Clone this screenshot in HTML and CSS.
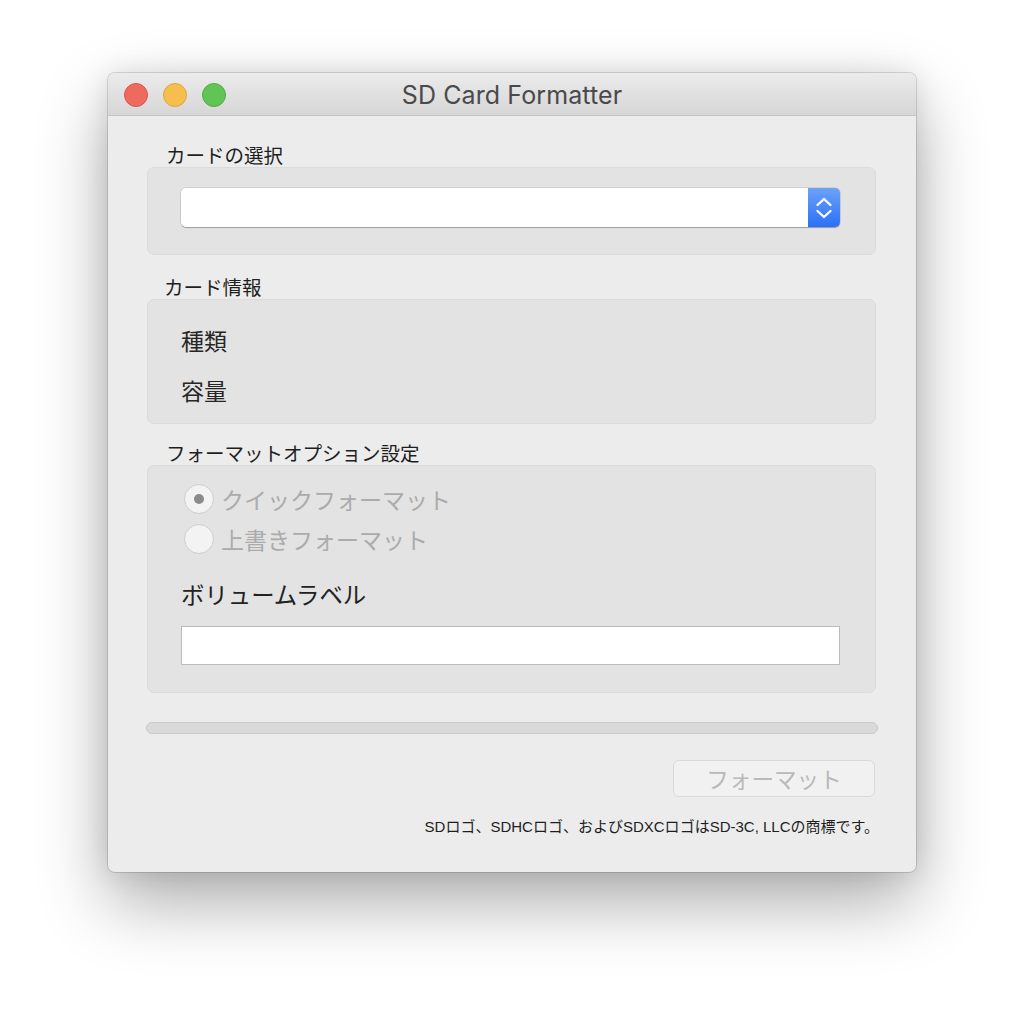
FILE: index.html
```html
<!DOCTYPE html>
<html lang="ja">
<head>
<meta charset="utf-8">
<title>SD Card Formatter</title>
<link rel="stylesheet" href="styles.css">
</head>
<body>
<div class="window">
  <div class="titlebar">
    <div class="lights">
      <span class="light red"></span>
      <span class="light yellow"></span>
      <span class="light green"></span>
    </div>
    <div class="title">SD Card Formatter</div>
    <div class="spacer"></div>
  </div>
  <div class="content">
    <div class="group-label l1">カードの選択</div>
    <div class="group g1">
      <div class="popup">
        <div class="popup-field"></div>
        <div class="stepper">
          <svg width="32" height="38" viewBox="0 0 32 38">
            <path d="M9.5 16 L16 10 L22.5 16" fill="none" stroke="#fff" stroke-width="2.3" stroke-linecap="round" stroke-linejoin="round"/>
            <path d="M9.5 22 L16 28 L22.5 22" fill="none" stroke="#fff" stroke-width="2.3" stroke-linecap="round" stroke-linejoin="round"/>
          </svg>
        </div>
      </div>
    </div>

    <div class="group-label l2">カード情報</div>
    <div class="group g2">
      <div class="info">種類</div>
      <div class="info">容量</div>
    </div>

    <div class="group-label l3">フォーマットオプション設定</div>
    <div class="group g3">
      <div class="radio-row">
        <span class="radio checked"><span class="dot"></span></span>
        <span class="radio-text">クイックフォーマット</span>
      </div>
      <div class="radio-row">
        <span class="radio"></span>
        <span class="radio-text">上書きフォーマット</span>
      </div>
      <div class="vol-label">ボリュームラベル</div>
      <div class="textfield"></div>
    </div>

    <div class="progress"></div>
    <div class="button-row">
      <div class="button">フォーマット</div>
    </div>
    <div class="footer">SDロゴ、SDHCロゴ、およびSDXCロゴはSD-3C, LLCの商標です。</div>
  </div>
</div>
</body>
</html>
```
FILE: styles.css
```css
html, body {
  margin: 0;
  padding: 0;
  background: #ffffff;
}
body {
  width: 1024px;
  height: 1016px;
  overflow: hidden;
  font-family: "Noto Sans CJK JP", "Liberation Sans", sans-serif;
}
.window {
  margin: 73px 0 0 108px;
  width: 808px;
  height: 799px;
  background: #ececec;
  border-radius: 7px;
  overflow: hidden;
  box-shadow: 0 0 0 1px rgba(0,0,0,0.13), 0 30px 70px rgba(0,0,0,0.33), 0 0 28px rgba(0,0,0,0.10);
}
.titlebar {
  height: 42px;
  border-bottom: 1px solid #c4c4c4;
  background: linear-gradient(#ebebeb, #d6d6d6);
  display: grid;
  grid-template-columns: 1fr auto 1fr;
  align-items: center;
}
.lights {
  display: flex;
  gap: 15px;
  padding-left: 16px;
  padding-top: 2px;
}
.light {
  width: 22px;
  height: 22px;
  border-radius: 50%;
  display: block;
}
.red { background: #ee6a5f; border: 1px solid #d9564b; }
.yellow { background: #f6be4f; border: 1px solid #dea53b; }
.green { background: #61c454; border: 1px solid #4ead41; }
.title {
  font-family: "Inter", "Liberation Sans", sans-serif;
  font-size: 25px;
  color: #4a4a4a;
  letter-spacing: 0.1px;
  padding-top: 2px;
}
.content {
  padding: 0 40px 0 39px;
}
.group-label {
  font-size: 19.5px;
  line-height: 24px;
  color: #1e1e1e;
  padding-left: 18px;
}
.l1 { margin-top: 27px; padding-left: 19px; }
.l2 { margin-top: 20px; padding-left: 17px; }
.l3 { margin-top: 17px; padding-left: 19px; }
.group {
  background: #e3e3e3;
  border: 1px solid #dbdbdb;
  border-radius: 7px;
}
.g1 {
  padding: 20px 35px 27px 33px;
}
.popup {
  display: flex;
  height: 39px;
  border-radius: 5px;
  box-shadow: 0 0 0 0.5px rgba(0,0,0,0.18), 0 1px 1px rgba(0,0,0,0.25);
  overflow: hidden;
}
.popup-field {
  flex: 1;
  background: #ffffff;
}
.stepper {
  width: 32px;
  background: linear-gradient(#6ca2f9, #2b6ff6);
  display: flex;
  align-items: center;
  justify-content: center;
}
.stepper svg { display: block; }
.g2 {
  padding: 25px 33px 18px 33px;
  display: flex;
  flex-direction: column;
  gap: 20px;
}
.info {
  font-size: 23px;
  line-height: 30px;
  color: #262626;
}
.g3 {
  padding: 17px 35px 27px 33px;
}
.radio-row {
  display: flex;
  align-items: center;
  height: 32px;
  margin-left: 3px;
  gap: 7px;
}
.radio-row + .radio-row { margin-top: 8px; }
.radio {
  width: 28px;
  height: 28px;
  border-radius: 50%;
  border: 1px solid #cdcdcd;
  background: #f3f3f3;
  display: flex;
  align-items: center;
  justify-content: center;
}
.dot {
  width: 10px;
  height: 10px;
  border-radius: 50%;
  background: #8b8b8b;
}
.radio-text {
  font-size: 23px;
  color: #ababab;
  line-height: 30px;
}
.vol-label {
  margin-top: 24px;
  font-size: 23.4px;
  line-height: 30px;
  color: #222222;
}
.textfield {
  margin-top: 17px;
  height: 37px;
  background: #ffffff;
  border: 1px solid #bcbcbc;
}
.progress {
  margin: 29px -2px 0 -1px;
  height: 10px;
  border-radius: 6px;
  background: #dadada;
  border: 1px solid #c9c9c9;
}
.button-row {
  display: flex;
  justify-content: flex-end;
  margin-top: 26px;
  padding-right: 1px;
}
.button {
  width: 200px;
  height: 35px;
  border: 1px solid #d9d9d9;
  border-radius: 6px;
  background: #f1f1f1;
  color: #b9b9b9;
  font-size: 22.6px;
  line-height: 35px;
  text-align: center;
}
.footer {
  margin-top: 20px;
  margin-right: -3px;
  font-family: "Liberation Sans", "Noto Sans CJK JP", sans-serif;
  font-size: 15px;
  line-height: 20px;
  color: #1e1e1e;
  text-align: right;
}
```
